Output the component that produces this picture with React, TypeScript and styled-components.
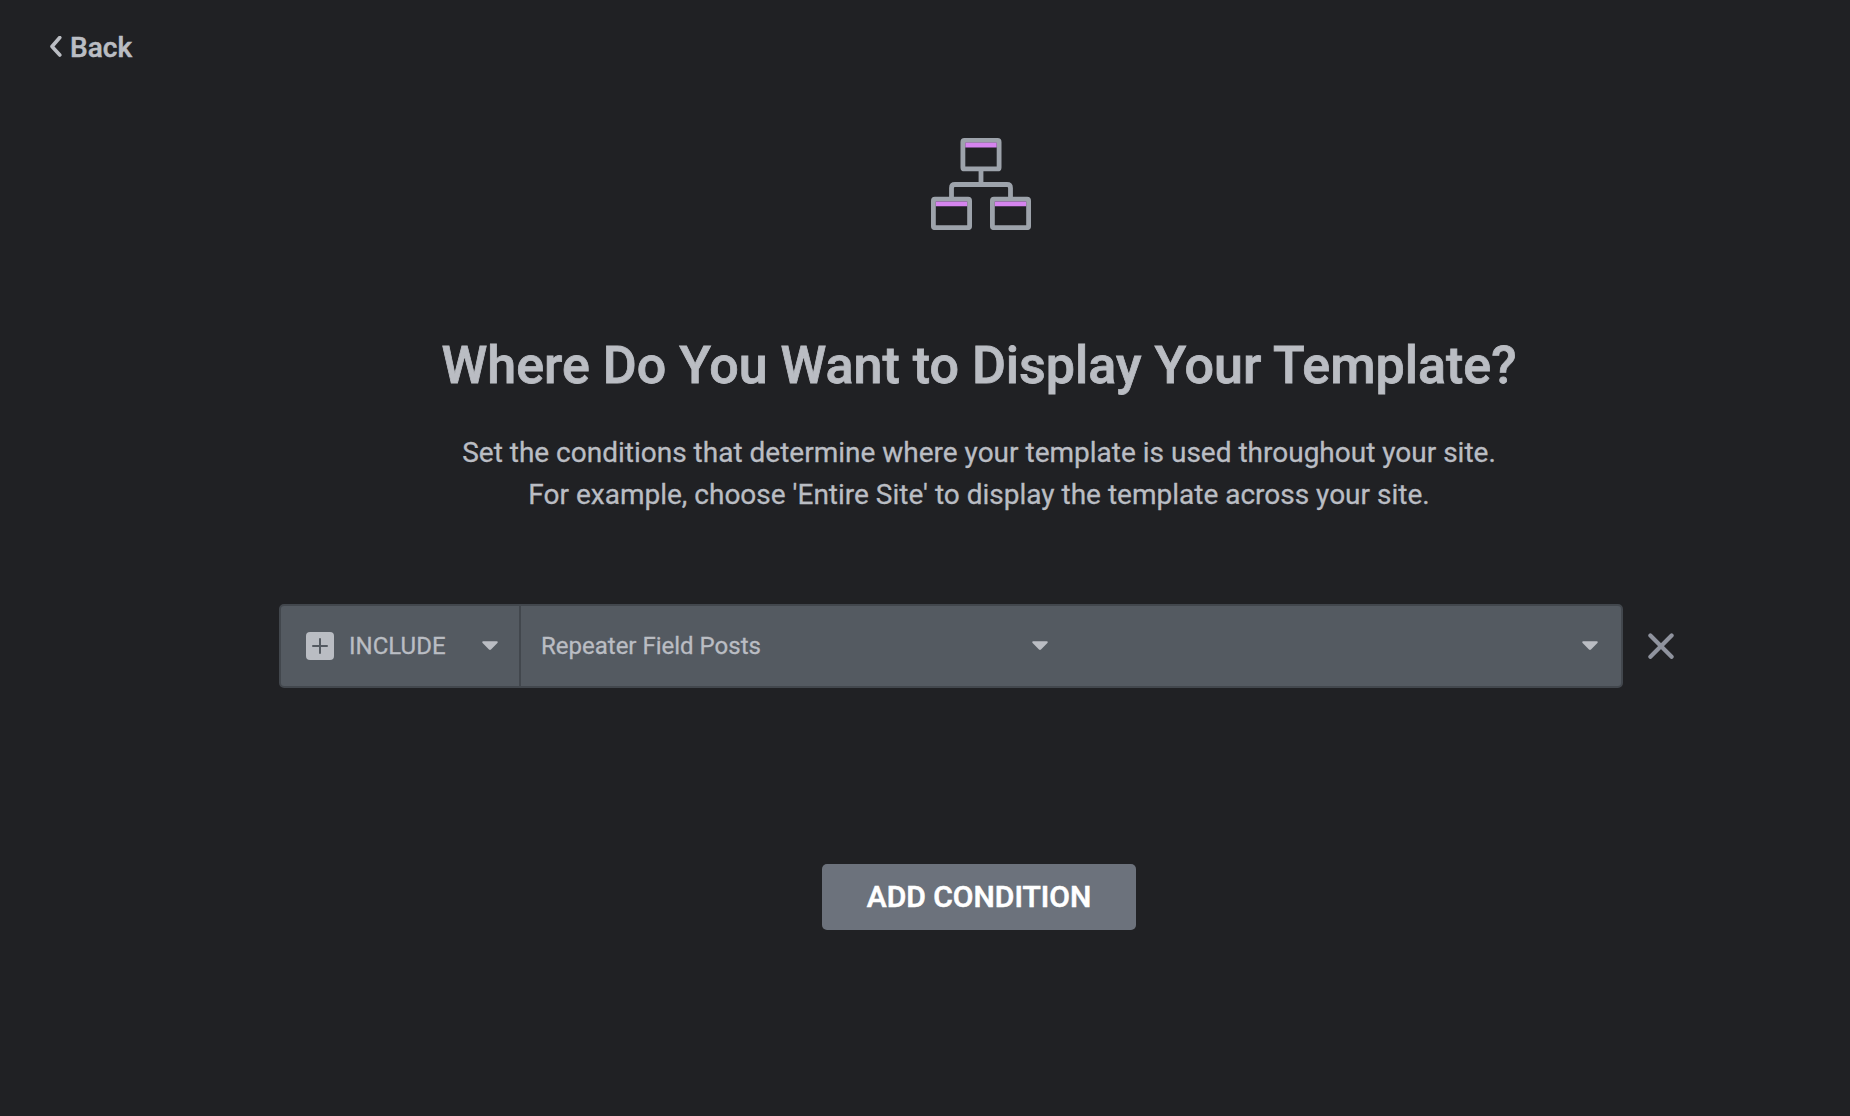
import React from 'react';
import styled, { createGlobalStyle } from 'styled-components';

const GlobalStyle = createGlobalStyle`
  *, *::before, *::after { box-sizing: border-box; }
  body {
    margin: 0;
    background: #202124;
    font-family: Roboto, "Liberation Sans", sans-serif;
    color: #babdc3;
    -webkit-text-stroke: 0.3px currentColor;
  }
  button { font: inherit; color: inherit; border: 0; background: none; padding: 0; cursor: pointer; }
  svg { display: block; flex: none; }
`;

const Page = styled.main`
  width: 100%;
  height: 1116px;
  overflow: hidden;
  display: flex;
  flex-direction: column;
`;

const TopBar = styled.header`
  height: 94px;
  padding-left: 50px;
  display: flex;
  align-items: center;
`;

const BackButton = styled.button`
  display: flex;
  align-items: center;
  gap: 8px;
  && { font-size: 28px; font-weight: 500; line-height: 32px; -webkit-text-stroke-width: 0.5px; }
`;

const BackLabel = styled.span`
  padding-top: 2px;
`;

const Content = styled.section`
  padding-left: 108px;
  display: flex;
  flex-direction: column;
  align-items: center;
`;

const IconHolder = styled.div`
  margin: 44px 0 0 3px;
`;

const Title = styled.h1`
  margin: 104px 0 0;
  font-size: 52px;
  line-height: 64px;
  font-weight: 500;
  white-space: nowrap;
  -webkit-text-stroke-width: 0.8px;
`;

const Description = styled.p`
  margin: 34px 0 0;
  font-size: 28px;
  line-height: 42px;
  text-align: center;
  white-space: nowrap;
`;

const ConditionRow = styled.div`
  align-self: flex-start;
  margin: 88px 0 0 171px;
  display: flex;
  align-items: center;
  gap: 25px;
`;

const Controls = styled.div`
  width: 1344px;
  height: 84px;
  display: flex;
  border: 2px solid #42474d;
  border-radius: 5px;
  background: #545a61;
  overflow: hidden;
`;

const Select = styled.button<{ $width: number; $left: number; $right: number; $divided?: boolean }>`
  width: ${p => p.$width}px;
  padding: 0 ${p => p.$right}px 0 ${p => p.$left}px;
  display: flex;
  align-items: center;
  justify-content: space-between;
  && {
    font-size: 24px;
    ${p => p.$divided && 'border-right: 2px solid #42474d;'}
  }
`;

const SelectLabel = styled.span`
  display: flex;
  align-items: center;
  gap: 15px;
  white-space: nowrap;
`;

const RemoveButton = styled.button`
  && { color: #8f939e; }
`;

const AddButton = styled.button`
  && {
    margin-top: 176px;
    width: 314px;
    height: 66px;
    border-radius: 5px;
    background: #6c727c;
    color: #fff;
    font-size: 30px;
    font-weight: 500;
    line-height: 66px;
    -webkit-text-stroke: 0.6px #fff;
  }
`;

const Chevron = () => (
  <svg width="12" height="22" viewBox="0 0 12 22" fill="none" stroke="currentColor" strokeWidth="3.6" strokeLinecap="round" strokeLinejoin="round">
    <path d="M9.8 1.5 2 10.5l7.8 8.5" />
  </svg>
);

const Caret = () => (
  <svg width="16" height="10" viewBox="0 0 16 10" fill="currentColor">
    <path d="M1.2 0.2h13.6c1 0 1.3 1 .6 1.7L9 8.5c-.6.6-1.4.6-2 0L.6 1.9C-.1 1.2.2.2 1.2.2Z" />
  </svg>
);

const PlusBox = () => (
  <svg width="28" height="28" viewBox="0 0 28 28">
    <rect width="28" height="28" rx="4" fill="#babdc3" />
    <path d="M14 7v14M7 14h14" stroke="#545a61" strokeWidth="2" strokeLinecap="round" />
  </svg>
);

const Cross = () => (
  <svg width="26" height="26" viewBox="0 0 26 26" fill="none" stroke="currentColor" strokeWidth="4.2" strokeLinecap="round">
    <path d="M2.4 2.6 23.6 23.8M23.6 2.6 2.4 23.8" />
  </svg>
);

const windows = [
  [29.5, 0],
  [0, 58.8],
  [59, 58.8],
];

const Sitemap = () => (
  <svg width="100" height="92" viewBox="0 0 100 92" fill="none">
    <path d="M50 32v14.5M20.500 60V50q0-3.500 3.500-3.500h52q3.500 0 3.500 3.500V60" stroke="#9da3ab" strokeWidth="4.8" />
    {windows.map(([x, y]) => (
      <g key={x} transform={`translate(${x} ${y})`}>
        <rect x="2.4" y="2.4" width="36.2" height="28.5" rx="1.5" fill="#202124" stroke="#9da3ab" strokeWidth="4.8" />
        <path d="M4.8 4.6h31.4v4.9H4.8z" fill="#d584ee" />
      </g>
    ))}
  </svg>
);

export default function App() {
  return (
    <>
      <GlobalStyle />
      <Page>
        <TopBar>
          <BackButton><Chevron /><BackLabel>Back</BackLabel></BackButton>
        </TopBar>
        <Content>
          <IconHolder><Sitemap /></IconHolder>
          <Title>Where Do You Want to Display Your Template?</Title>
          <Description>
            Set the conditions that determine where your template is used throughout your site.<br />
            For example, choose 'Entire Site' to display the template across your site.
          </Description>
          <ConditionRow>
            <Controls>
              <Select $width={240} $left={25} $right={21.5} $divided>
                <SelectLabel><PlusBox />INCLUDE</SelectLabel>
                <Caret />
              </Select>
              <Select $width={550} $left={20} $right={23.5}>
                <SelectLabel>Repeater Field Posts</SelectLabel>
                <Caret />
              </Select>
              <Select $width={550} $left={20} $right={23.5} aria-label="Sub condition">
                <SelectLabel />
                <Caret />
              </Select>
            </Controls>
            <RemoveButton aria-label="Remove condition"><Cross /></RemoveButton>
          </ConditionRow>
          <AddButton>ADD CONDITION</AddButton>
        </Content>
      </Page>
    </>
  );
}
